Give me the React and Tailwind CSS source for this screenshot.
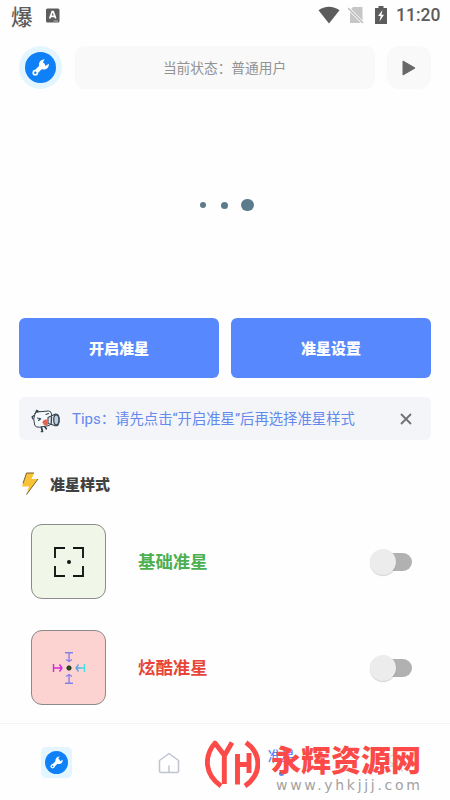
const Wrench = ({ className }) => (
  <svg viewBox="0 0 31 31" className={className}>
    <circle cx="15.5" cy="15.5" r="15.5" fill="#0f80f5" />
    <path d="M10.200 20.800L18 13" stroke="#fff" strokeWidth="4.200" strokeLinecap="round" />
    <circle cx="10.300" cy="20.700" r="2.900" fill="#fff" />
    <path
      d="M19.800 7.300c-4.200.2-6.300 3.200-5.600 6.500.6 3 3.200 4.200 5.600 3.600 2.800-.5 4.300-2.700 4.100-5.600l-3.300 2-2.400-1.300-.1-2.800z"
      fill="#fff"
    />
    <circle cx="10.300" cy="20.700" r="1.200" fill="#0f80f5" />
  </svg>
);

const StatusBar = () => (
  <div className="flex h-[31px] items-center pl-[11px] pr-[10px] text-[#5c5c5c]">
    <span className="w-[22px] text-[21.500px] font-medium leading-[30px]">爆</span>
    <svg viewBox="0 0 14 16" className="ml-[13px] h-4 w-3.5">
      <rect x="0" y="0.500" width="13.500" height="14" rx="1.500" fill="#5c5c5c" />
      <path d="M3.700 10.500L6.200 3.500h1L9.700 10.500M4.800 8.300h3.800" fill="none" stroke="#fff" strokeWidth="1.700" />
      <path d="M7.500 13h4.500" stroke="#bbb" strokeWidth="1" />
    </svg>
    <svg viewBox="0 0 22 18" className="ml-auto h-[18px] w-[22px] -translate-y-px">
      <path d="M.5 4.200C6.500-.5 15.500-.5 21.500 4.200L11 17.500z" fill="#5c5c5c" />
    </svg>
    <svg viewBox="0 0 16 18" className="ml-[8px] h-[18px] w-4 -translate-y-px">
      <path d="M5 1h9.500v16H2V4z" fill="#c6c6c6" />
      <path d="M-.5 1.500L15 17" stroke="#fff" strokeWidth="3" />
      <path d="M0 2L15 17" stroke="#bababa" strokeWidth="1.500" />
    </svg>
    <svg viewBox="0 0 12 18" className="ml-[11px] h-[18px] w-3 -translate-y-px">
      <path d="M0 2h3.500V0h5v2H12v16H0z" fill="#5c5c5c" />
      <path d="M7.500 4L3 10h2.700L4.500 15.500 9 8.700H6.400z" fill="#fff" />
    </svg>
    <span className="ml-[9px] w-[44px] whitespace-nowrap pt-px font-['Roboto'] text-[17.500px] font-medium leading-none">11:20</span>
  </div>
);

const Header = () => (
  <header className="mt-[15px] flex h-[43px] px-[19px]">
    <div className="flex size-[43px] items-center justify-center rounded-full bg-[#e3f5ff]">
      <Wrench className="size-[31px]" />
    </div>
    <div className="ml-[13px] flex w-[300px] items-center justify-center rounded-[9px] bg-[#f9f9f9] text-[13.700px] text-[#929292]">
      <span className="pr-px">当前状态：普通用户</span>
    </div>
    <button className="ml-3 flex w-[44px] items-center justify-center rounded-[12px] bg-[#f9f9f9]">
      <svg viewBox="0 0 14 16" className="h-4 w-3.5">
        <path d="M1 1l12 7-12 7z" fill="#686868" stroke="#686868" strokeWidth="1" strokeLinejoin="round" />
      </svg>
    </button>
  </header>
);

const Loader = () => (
  <div className="mt-[109px] flex h-[14px] items-center pl-[200px]">
    <span className="size-[6px] rounded-full bg-[#5d7c8b]" />
    <span className="ml-[15px] size-[7px] rounded-full bg-[#5d7c8b]" />
    <span className="ml-[13px] size-[12.500px] rounded-full bg-[#5d7c8b]" />
  </div>
);

const Mascot = () => (
  <svg viewBox="0 0 30 25" className="h-[25px] w-[30px]" strokeLinejoin="round" strokeLinecap="round">
    <path d="M4.500 4L5.500 1 8.500 2.800z" fill="#33414b" stroke="#33414b" strokeWidth="1" />
    <path d="M3 6.500L1 8l1 2" fill="none" stroke="#33414b" strokeWidth="1.200" />
    <path d="M4 4.500Q5 3 8 2.800L17.500 2q2.500 0 3 3l1 8-3 3.500-10 1.700q-4 .6-4.800-2.200Q1.500 10 4 4.500z" fill="#f5f8fa" stroke="#33414b" strokeWidth="1" />
    <path d="M6.500 9l3.200.7-2.200 1.800M15 5.500l2.500-1" fill="none" stroke="#33414b" strokeWidth="1.100" />
    <path d="M17 8.500l7.500-3.500q3 0 3.500 3.500.8 4.500-1 7.500-1.500 1.500-4 .2L17 14.500z" fill="#e6eef3" stroke="#33414b" strokeWidth="1.100" />
    <path d="M11.500 13.500q.5-3.500 4.500-3l1 5q-4 2.500-5.500-2z" fill="#e4644f" />
    <ellipse cx="25.300" cy="10.800" rx="2.600" ry="5" fill="#bdcfe0" stroke="#33414b" strokeWidth="1.200" />
    <path d="M20.500 8l-.3 6.500" stroke="#33414b" strokeWidth="1.300" />
    <path d="M10.500 18.500l1 4h-1M14 18l1.300 1.800" fill="none" stroke="#33414b" strokeWidth="1.700" />
  </svg>
);

const Tips = () => (
  <div className="mx-[19px] mt-[19px] flex h-[43px] items-center rounded-[6px] bg-[#f4f5f9] pl-[12px] pr-[19px]">
    <div className="pt-[5px]">
      <Mascot />
    </div>
    <p className="ml-[11px] whitespace-nowrap text-[14.350px] text-[#6389ec]">
      <span className="font-['Roboto'] text-[15px]">Tips</span>：请先点击
      <span className="font-['Roboto']">“</span>开启准星<span className="font-['Roboto']">”</span>后再选择准星样式
    </p>
    <svg viewBox="0 0 12 12" className="ml-auto size-3">
      <path d="M1 1l10 10M11 1L1 11" stroke="#707070" strokeWidth="1.800" />
    </svg>
  </div>
);

const BracketSight = () => (
  <svg viewBox="0 0 30 30" className="size-[30px]">
    <path d="M1 11V1h10M19 1h10v10M29 19v10H19M11 29H1V19" fill="none" stroke="#151515" strokeWidth="1.900" />
    <circle cx="15" cy="15" r="2" fill="#151515" />
  </svg>
);

const ColorSight = () => (
  <svg viewBox="0 0 34 34" className="size-[34px]" fill="none" strokeWidth="1.400">
    <path d="M13 1.800h8M17 2v9M14 8.500l3 2 3-2" stroke="#8581e9" />
    <path d="M13 32.200h8M17 32v-9M14 25.500l3-2 3 2" stroke="#8581e9" />
    <path d="M1.500 13v8M2 17h8M7.500 13.500L10 17l-2.500 3.500" stroke="#d128db" />
    <path d="M32.500 13v8M32 17h-4" stroke="#41dfdf" />
    <path d="M28.500 17H24M26.500 13.500L24 17l2.500 3.500" stroke="#60a5e3" />
    <circle cx="17" cy="17" r="2.100" fill="#235b12" stroke="#202020" strokeWidth="1" />
  </svg>
);

const Toggle = () => (
  <div className="relative ml-auto h-[26px] w-[42px]">
    <div className="ml-[14px] mt-[4px] h-[18px] w-[28px] rounded-full bg-[#b1b1b1]" />
    <div className="absolute left-0 top-0 size-[26px] rounded-full bg-[#ececec] shadow-[0_1px_1px_rgba(0,0,0,0.18)]" />
  </div>
);

const StyleRow = ({ label, labelClass, boxClass, children }) => (
  <div className="flex h-[75px] items-center">
    <div className={`flex size-[75px] items-center justify-center rounded-[11px] border-[1.500px] border-[#8b8b8b] ${boxClass}`}>
      {children}
    </div>
    <span className={`ml-[32px] text-[17.400px] font-bold ${labelClass}`}>{label}</span>
    <Toggle />
  </div>
);

const Watermark = () => (
  <div className="absolute left-[205px] top-[15px] flex h-[60px] w-[230px]">
    <svg viewBox="0 0 55 50" className="h-[50px] w-[55px] shrink-0" fill="none" stroke="#fb4a48" strokeWidth="4.900" strokeLinejoin="round">
      <path d="M16 47C-1 35-1 17 10 4l9.500 12.500L27 3.500M19.300 16v29" />
      <path d="M32.500 45.500V15M32.500 25.500H44M44 14v20M41 3.500C57 15 57 35 40 47" />
    </svg>
    <div className="ml-[11px] flex flex-col">
      <span className="mt-[4px] whitespace-nowrap text-[30px] font-black leading-[30px] text-[#fb4a48]">永辉资源网</span>
      <span className="ml-[5px] mt-[4px] whitespace-nowrap font-['DejaVu_Sans'] text-[14px] leading-4 tracking-[2.700px] text-[#a2a2a2]">www.yhkjjj.com</span>
    </div>
  </div>
);

const BottomNav = () => (
  <nav className="relative mt-[18px] flex h-[76px] items-center border-t border-[#f3f3f3] pt-[2px]">
    <div className="flex flex-1 justify-center">
      <div className="flex size-[31px] items-center justify-center rounded-[5px] bg-[#e3f5ff]">
        <Wrench className="size-[23px]" />
      </div>
    </div>
    <div className="flex flex-1 justify-center">
      <svg viewBox="0 0 22 22" className="size-[22px]" fill="none" stroke="#bfc4d0" strokeWidth="1.500" strokeLinejoin="round">
        <path d="M1.500 8.500L11 1.500l9.500 7V19q0 1.500-1.500 1.500H3Q1.500 20.500 1.500 19zM11 13.500v7" />
      </svg>
    </div>
    <div className="flex flex-1 flex-col items-center pb-[4px] text-[13.500px] font-medium leading-5 text-[#5888fd]">
      准星
      <span className="mt-1.5 size-[5px] rounded-full bg-[#5888fd]" />
    </div>
    <div className="flex flex-1 justify-center">
      <svg viewBox="0 0 22 22" className="size-[20px]" fill="none" stroke="#d3d7df" strokeWidth="1.500">
        <circle cx="11" cy="7" r="5" />
        <path d="M2 21q0-7 9-7t9 7" />
      </svg>
    </div>
    <Watermark />
  </nav>
);

export default function App() {
  return (
    <div className="h-[800px] w-[450px] overflow-hidden bg-[#fefefe] font-['Noto_Sans_CJK_SC',sans-serif]">
      <StatusBar />
      <Header />
      <Loader />
      <div className="mt-[106px] grid h-[60px] grid-cols-2 gap-3 px-[19px] text-[15px] font-black text-white">
        <button className="rounded-[6px] bg-[#5888fd]">开启准星</button>
        <button className="rounded-[6px] bg-[#5888fd]">准星设置</button>
      </div>
      <Tips />
      <div className="mt-[32px] flex h-6 items-center pl-[21px]">
        <svg viewBox="0 0 18 24" className="h-6 w-[18px]">
          <path d="M5.500 1H13l-2.500 6H17L5.500 22.500 8 14.500H1z" fill="#f9c336" />
          <path d="M2 11.500L5.500 1H13M17 7L5.500 22.500" fill="none" stroke="#67512b" strokeWidth="0.900" />
        </svg>
        <h2 className="ml-[11px] text-[15px] font-black text-[#414141]">准星样式</h2>
      </div>
      <div className="mt-7 flex flex-col gap-[31px] pl-[31px] pr-[38px]">
        <StyleRow label="基础准星" labelClass="text-[#4caf50]" boxClass="bg-[#f0f7e9]">
          <BracketSight />
        </StyleRow>
        <StyleRow label="炫酷准星" labelClass="text-[#e74538]" boxClass="bg-[#fcd3d1]">
          <ColorSight />
        </StyleRow>
      </div>
      <BottomNav />
    </div>
  );
}
